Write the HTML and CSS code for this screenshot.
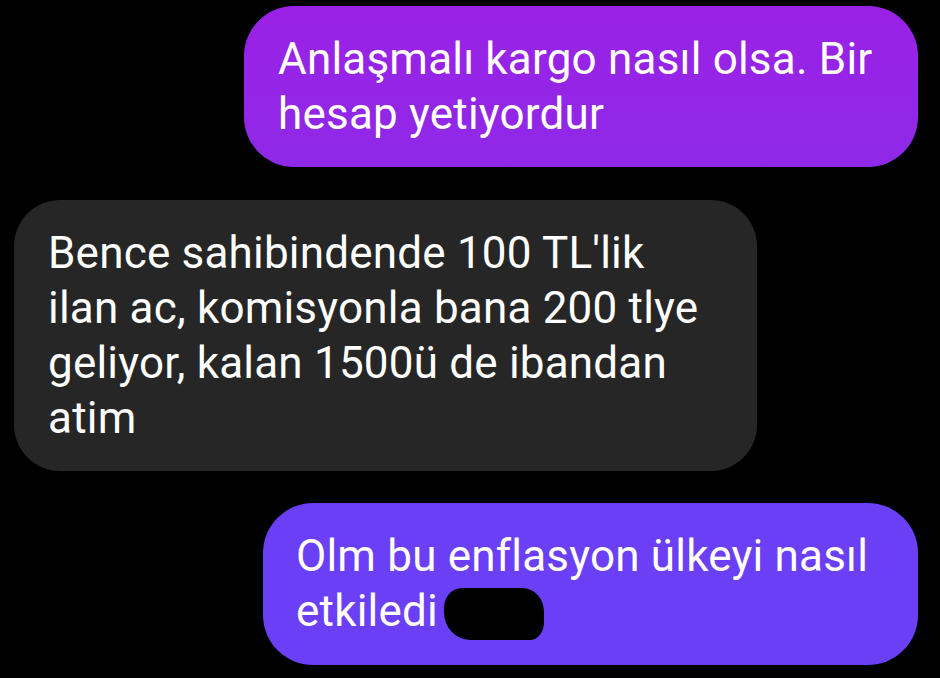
FILE: index.html
```html
<!DOCTYPE html>
<html lang="tr">
  <head>
    <meta charset="UTF-8">
    <meta name="viewport" content="width=device-width, initial-scale=1">
    <title>Mesajlar</title>
    <link rel="stylesheet" href="styles.css">
  </head>
  <body>

    <div class="thread">

      <div class="msg msg-out msg-violet msg-w1">
        Anlaşmalı kargo nasıl olsa. Bir hesap yetiyordur
      </div>

      <div class="msg msg-in msg-w2">
        Bence sahibindende 100 TL'lik ilan ac, komisyonla bana 200 tlye geliyor, kalan 1500ü de ibandan atim
      </div>

      <div class="msg msg-out msg-indigo msg-w3">
        Olm bu enflasyon ülkeyi nasıl etkiledi<span class="redacted"></span>
      </div>

    </div>

  </body>
</html>
```

FILE: styles.css
```css
body { margin: 0; background: #000 }
body { font-family: Roboto, "Noto Sans", sans-serif }

.thread {
  display: flex;
  flex-direction: column;
  gap: 33px;
  padding: 6px 22px 0 14px;
}

/* bubbles */

.msg {
  box-sizing: border-box;
  padding: 26px 44px 25px 34px;
  border-radius: 50px;
  font-size: 44px;
  line-height: 55px;
  letter-spacing: 0.2px;
  color: #fff;
}

.msg-in  { align-self: flex-start; background: #262626; border-radius: 46px; }
.msg-out { align-self: flex-end }

.msg-violet { background: linear-gradient(180deg, #9a21e6 0%, #8f29e7 100%) }
.msg-indigo { background: #6b3ff5; padding-left: 33px; margin-top: -1px }

.msg-w1 { width: 674px }
.msg-w2 { width: 743px }
.msg-w3 { width: 655px }

/* scribbled-out part of the screenshot */

.redacted {
  display: inline-block;
  width: 100px;
  height: 52px;
  margin-left: 6px;
  vertical-align: -14px;
  background: #000;
  border-radius: 18px 22px 14px 26px / 20px 24px 18px 28px;
}
```
